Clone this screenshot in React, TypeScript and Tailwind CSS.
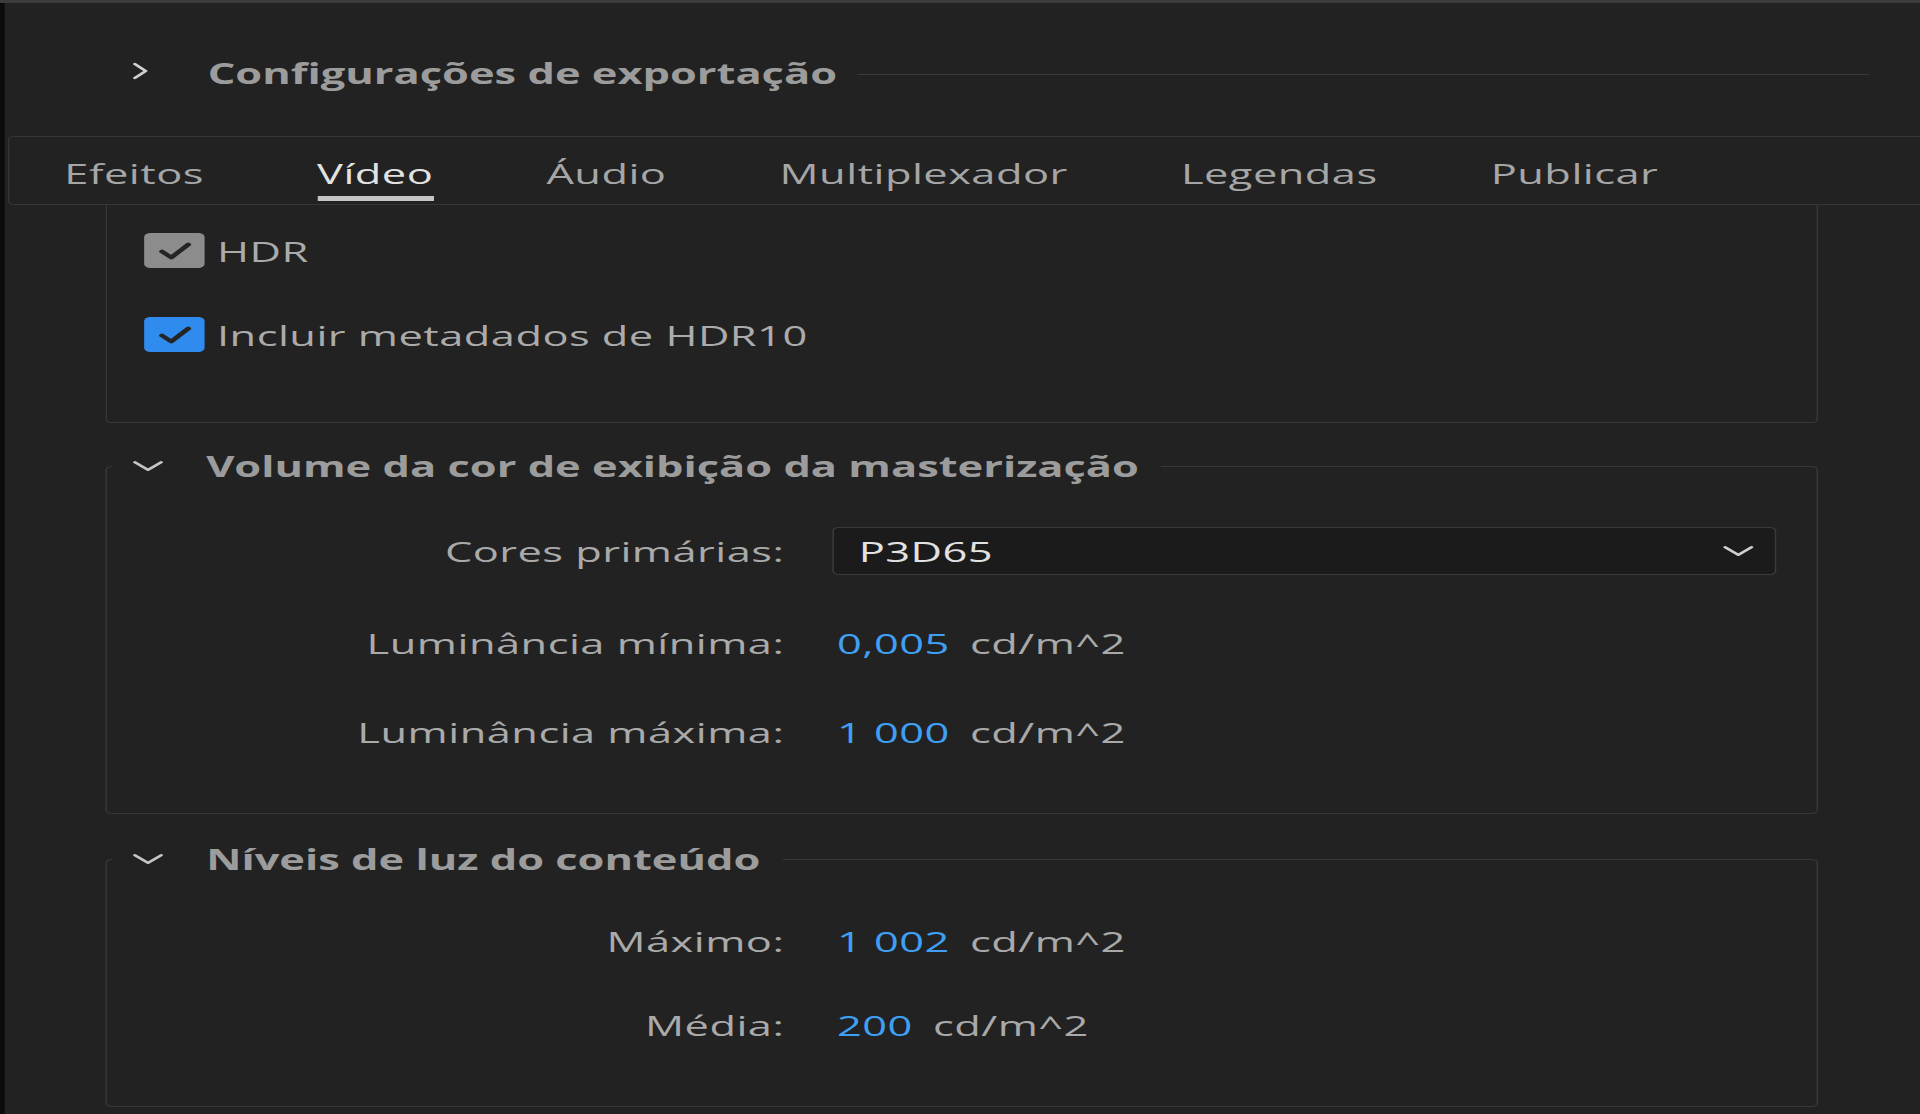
import type { ReactNode } from "react";

const tabs = ["Efeitos", "Vídeo", "Áudio", "Multiplexador", "Legendas", "Publicar"];

const ChevronRight = () => (
  <svg viewBox="0 0 11 18" className="mb-[5px] h-[18px] w-[11px]" fill="none" stroke="#d0d0d0" strokeWidth={2.4} strokeLinecap="round" strokeLinejoin="round">
    <path d="M2 2 L9 9 L2 16" />
  </svg>
);

const ChevronDown = ({ color = "#c6c6c6" }: { color?: string }) => (
  <svg viewBox="0 0 22 12" className="h-[12px] w-[21px]" fill="none" stroke={color} strokeWidth={2.3} strokeLinecap="round" strokeLinejoin="round">
    <path d="M2 2 L11 10 L20 2" />
  </svg>
);

const Checkbox = ({ blue }: { blue?: boolean }) => (
  <div className={`flex h-[35px] w-[39px] items-center justify-center rounded-[4px] ${blue ? "bg-[#2f8cee]" : "bg-[#8c8c8c]"}`}>
    <svg viewBox="0 0 24 20" className="h-[20px] w-[24px]" fill="none" stroke="#252525" strokeWidth={3.6} strokeLinecap="round" strokeLinejoin="round">
      <path d="M3.5 10.5 L9.5 16.5 L20.5 3.5" />
    </svg>
  </div>
);

const Section = ({ title, className, children }: { title: string; className: string; children: ReactNode }) => (
  <fieldset className={`ml-[65px] w-[1105px] rounded-[4px] border border-[#383838] pb-[57px] ${className}`}>
    <legend className="ml-[3px]">
      <div className="flex h-[36px] items-center pl-[13px] pr-[14px]">
        <ChevronDown />
        <span className="ml-[27px] text-[28px] font-bold leading-[36px] text-[#9c9c9c]">{title}</span>
      </div>
    </legend>
    {children}
  </fieldset>
);

const Row = ({ label, className, children }: { label: string; className: string; children: ReactNode }) => (
  <div className={`flex h-[48px] items-center ${className}`}>
    <span className="w-[437px] text-right text-[28px] leading-[36px] tracking-[0.3px] text-[#aaaaaa]">{label}</span>
    <div className="ml-[34px] flex items-center">{children}</div>
  </div>
);

const Value = ({ v }: { v: string }) => (
  <>
    <span className="text-[28px] leading-[36px] tracking-[0.3px] text-[#3f9ff2]">{v}</span>
    <span className="ml-[13px] text-[28px] leading-[36px] tracking-[0.3px] text-[#a9a9a9]">cd/m^2</span>
  </>
);

export default function App() {
  return (
    <div className="h-[1114px] w-full overflow-hidden border-t-[3px] border-[#3c3c3c] bg-[#222222] font-['Open_Sans',sans-serif]">
      <div className="h-full w-[1239px] origin-top-left scale-x-[1.55] border-l-[3px] border-[#0b0b0b]">
        {/* export settings header */}
        <div className="h-[133px] pt-[52px]">
          <div className="flex h-[36px] items-center pl-[82px] pr-[33px]">
            <ChevronRight />
            <span className="ml-[38px] text-[28px] font-bold leading-[36px] text-[#9c9c9c]">Configurações de exportação</span>
            <div className="ml-[13px] mt-[3px] h-px flex-1 bg-[#3a3a3a]" />
          </div>
        </div>

        {/* tabs */}
        <div className="ml-[1.5px] h-[69px] rounded-l-[4px] border border-r-0 border-[#363636] pl-[36px] pt-[18px]">
          <div className="flex gap-[73px]">
            {tabs.map((t) => (
              <div key={t} className="flex flex-col">
                <span className={`text-[28px] leading-[36px] tracking-[0.3px] ${t === "Vídeo" ? "text-[#e2e2e2]" : "text-[#a6a6a6]"}`}>{t}</span>
                <div className={`mt-[5px] h-[5px] ${t === "Vídeo" ? "bg-[#c4c4c4]" : ""}`} />
              </div>
            ))}
          </div>
        </div>

        {/* HDR box, its top is scrolled under the tabs */}
        <div className="ml-[65px] h-[218px] w-[1105px] rounded-b-[4px] border border-t-0 border-[#383838] pl-[24px] pt-[28px]">
          <div className="flex h-[35px] items-center gap-[8px]">
            <Checkbox />
            <span className="text-[28px] leading-[36px] tracking-[0.3px] text-[#ababab]">HDR</span>
          </div>
          <div className="mt-[49px] flex h-[35px] items-center gap-[8px]">
            <Checkbox blue />
            <span className="text-[28px] leading-[36px] tracking-[0.3px] text-[#ababab]">Incluir metadados de HDR10</span>
          </div>
        </div>

        <Section title="Volume da cor de exibição da masterização" className="mt-[25px]">
          <Row label="Cores primárias:" className="mt-[43px]">
            <div className="-ml-[3px] flex h-[48px] w-[609px] items-center justify-between rounded-[4px] border border-[#3a3a3a] bg-[#1b1b1b] pl-[16px] pr-[13px]">
              <span className="text-[28px] leading-[36px] tracking-[0.3px] text-[#e2e2e2]">P3D65</span>
              <ChevronDown color="#d0d0d0" />
            </div>
          </Row>
          <Row label="Luminância mínima:" className="mt-[44px]">
            <Value v="0,005" />
          </Row>
          <Row label="Luminância máxima:" className="mt-[41px]">
            <Value v="1 000" />
          </Row>
        </Section>

        <Section title="Níveis de luz do conteúdo" className="mt-[27px]">
          <Row label="Máximo:" className="mt-[40px]">
            <Value v="1 002" />
          </Row>
          <Row label="Média:" className="mt-[36px]">
            <Value v="200" />
          </Row>
        </Section>
      </div>
    </div>
  );
}
